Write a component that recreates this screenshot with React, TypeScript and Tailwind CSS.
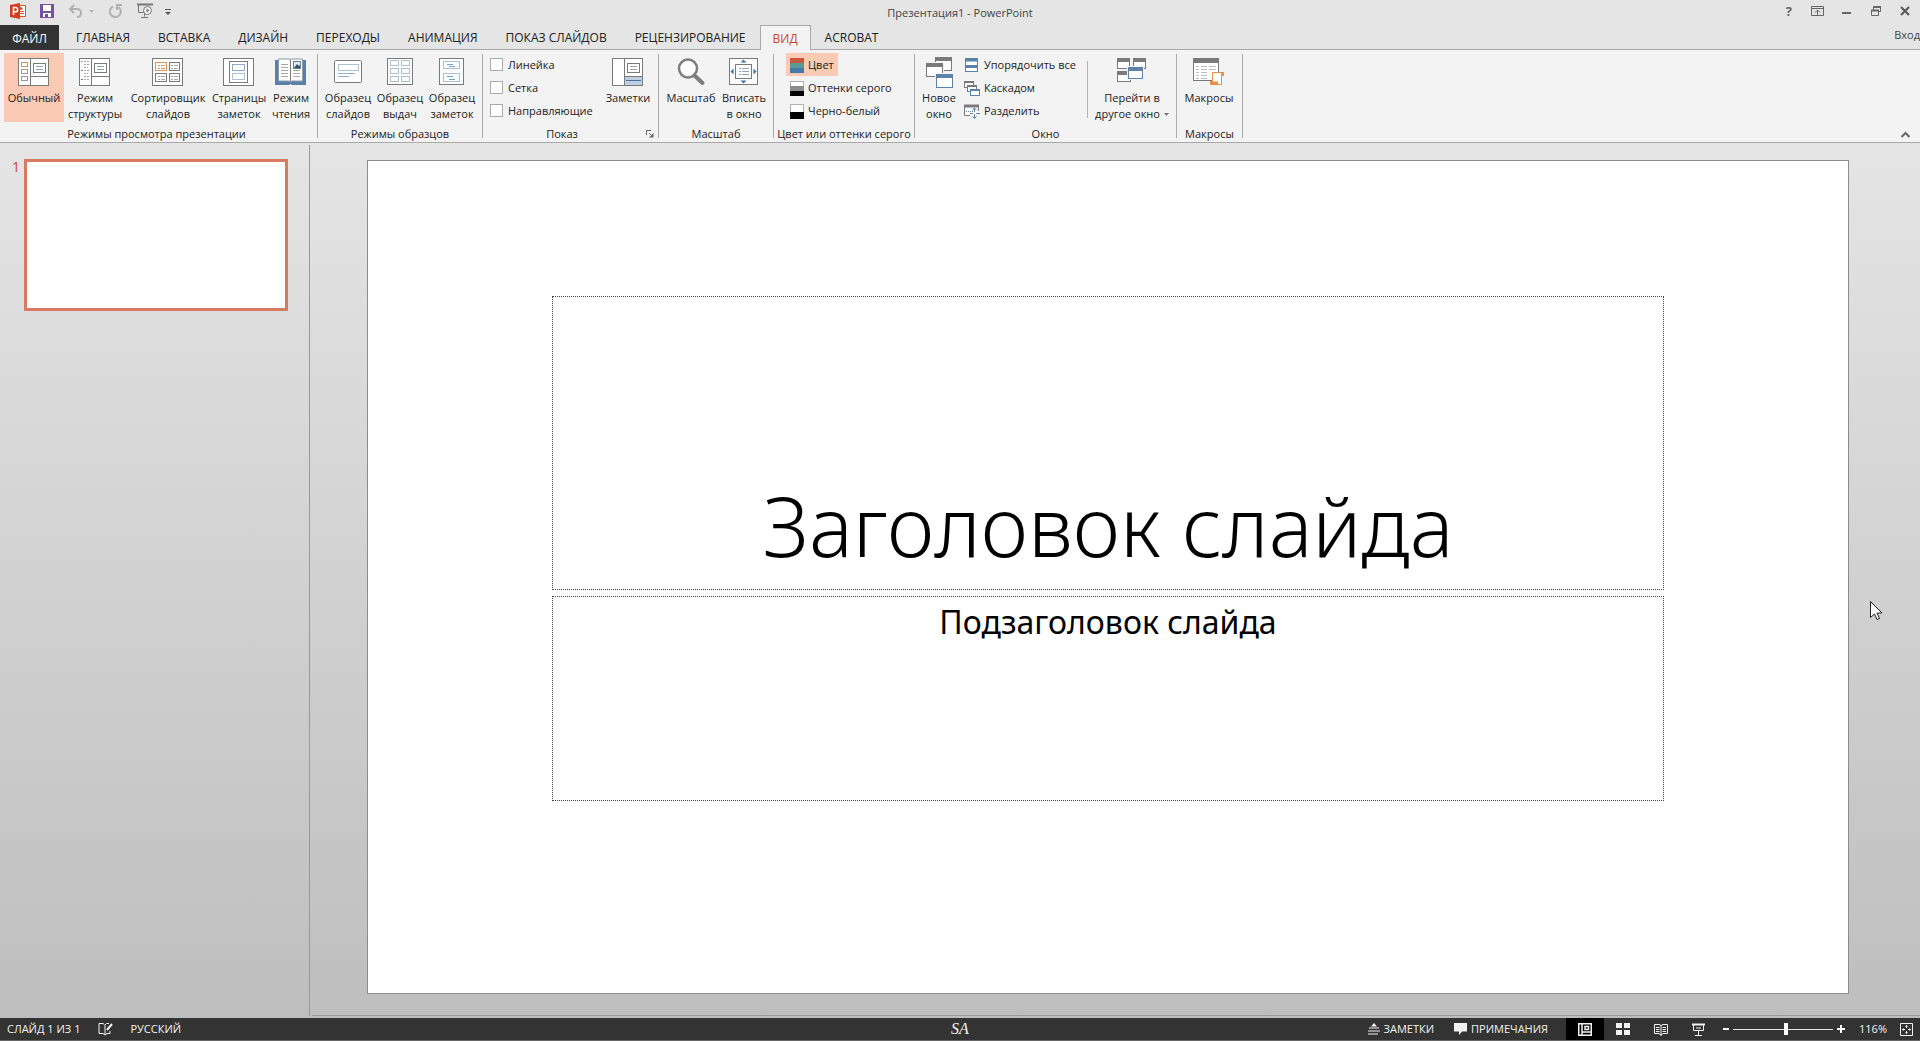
import type { ReactNode } from 'react';

const G = '#7a7a7a';
const B = '#5b82a8';
const O = '#dd9560';

function Svg({ w, h, children }: { w: number; h: number; children: ReactNode }) {
  return (
    <svg width={w} height={h} viewBox={`0 0 ${w} ${h}`} fill="none" aria-hidden="true" className="shrink-0">
      {children}
    </svg>
  );
}

/* ---------- ribbon icons, large ---------- */

const NormalIcon = () => (
  <Svg w={32} h={32}>
    <rect x="0.5" y="1.5" width="30" height="27" fill="#fff" stroke={G} />
    <path d="M12.5 1.5v27M12.5 19.5h18" stroke={G} />
    <rect x="3.5" y="5.5" width="6" height="4" stroke={O} />
    <rect x="3.5" y="12.5" width="6" height="4" stroke="#9a9a9a" />
    <rect x="3.5" y="19.5" width="6" height="4" stroke="#9a9a9a" />
    <rect x="15.5" y="6.5" width="12" height="9" stroke={G} />
    <path d="M18 9.5h7M18 12.5h7" stroke="#8aa0b5" />
  </Svg>
);

const OutlineIcon = () => (
  <Svg w={32} h={32}>
    <rect x="0.5" y="1.5" width="30" height="27" fill="#fff" stroke={G} />
    <path d="M12.5 1.5v27M12.5 19.5h18" stroke={G} />
    <path d="M2 4.5h2" stroke={O} />
    <path d="M5 4.5h5M5 7.5h5M5 10.5h4M5 13.5h5M5 16.5h4M5 19.5h5M5 22.5h5" stroke="#a5a5a5" strokeDasharray="2 1" />
    <path d="M2 13.5h2M2 22.5h2" stroke={G} />
    <rect x="15.5" y="6.5" width="12" height="9" stroke={G} />
    <path d="M18 9.5h7M18 12.5h7" stroke="#8aa0b5" />
  </Svg>
);

const SorterIcon = () => (
  <Svg w={32} h={32}>
    <rect x="0.5" y="1.5" width="30" height="27" fill="#fff" stroke={G} />
    <rect x="3.5" y="5.5" width="11" height="8" stroke={O} />
    <rect x="17.5" y="5.5" width="10" height="8" stroke={G} />
    <rect x="3.5" y="16.5" width="11" height="8" stroke={G} />
    <rect x="17.5" y="16.5" width="10" height="8" stroke={G} />
    <path d="M6 8.5h2M9 8.5h4M6 11.5h2M9 11.5h4" stroke={O} />
    <path d="M19 8.5h2M22 8.5h4M19 11.5h2M22 11.5h4M6 19.5h2M9 19.5h4M6 22.5h2M9 22.5h4M19 19.5h2M22 19.5h4M19 22.5h2M22 22.5h4" stroke="#a5a5a5" />
  </Svg>
);

const NotesPageIcon = () => (
  <Svg w={32} h={32}>
    <rect x="0.5" y="1.5" width="30" height="27" fill="#fff" stroke={G} />
    <rect x="6.5" y="4.5" width="18" height="21" stroke={G} />
    <rect x="9.5" y="7.5" width="12" height="6" stroke="#8fa9c4" />
    <rect x="9.5" y="16.5" width="12" height="6" stroke={B} strokeDasharray="1 1" />
  </Svg>
);

const ReadingIcon = () => (
  <Svg w={32} h={32}>
    <path d="M0 3h31v25H17l-1.500-1-1.500 1H0z" fill="#5880a8" />
    <path d="M3.500 2h11q1 0 1 1 0-1 1-1h11v22h-11l-1 1-1-1h-11z" fill="#fff" stroke="#8a9aa8" />
    <path d="M15.500 3v21" stroke={G} />
    <path d="M6 7.500h7M6 10.500h7M6 13.500h7M6 16.500h7M6 19.500h7M18 13.500h7M18 16.500h7M18 19.500h7" stroke="#a8a8a8" />
    <rect x="18.500" y="4.500" width="7" height="7" fill="#dfe8f0" stroke={B} />
    <path d="M19 11l3-4 2 2 1-1v3z" fill="#35506c" />
  </Svg>
);

const SlideMasterIcon = () => (
  <Svg w={28} h={32}>
    <rect x="0.5" y="3.500" width="27" height="22" rx="1" fill="#fff" stroke={G} />
    <rect x="4.500" y="7.500" width="20" height="6" stroke={B} strokeDasharray="1 1" />
    <path d="M4 16.500h17M4 19.500h11" stroke="#8fb0cc" />
  </Svg>
);

const HandoutMasterIcon = () => (
  <Svg w={28} h={32}>
    <rect x="1.500" y="1.500" width="25" height="26" fill="#fff" stroke={G} />
    {[3, 11, 19].map((y) => (
      <g key={y} stroke={B} strokeDasharray="1 1">
        <rect x="4.500" y={y + 0.5} width="8" height="5" />
        <rect x="15.500" y={y + 0.5} width="8" height="5" />
      </g>
    ))}
  </Svg>
);

const NotesMasterIcon = () => (
  <Svg w={28} h={32}>
    <rect x="1.500" y="1.500" width="24" height="26" fill="#fff" stroke={G} />
    <rect x="5.500" y="4.500" width="16" height="7" stroke={B} strokeDasharray="1 1" />
    <rect x="5.500" y="16.500" width="16" height="8" stroke={B} strokeDasharray="1 1" />
    <path d="M9 7.500h6M11 9.500h6M9 19.500h6M11 22.500h6" stroke="#6fa3c8" />
  </Svg>
);

const NotesIcon = () => (
  <Svg w={32} h={32}>
    <rect x="0.5" y="1.500" width="30" height="27" fill="#fff" stroke={G} />
    <rect x="13" y="20" width="17" height="8" fill="#bcd0e4" />
    <path d="M12.500 1.500v27M12.500 19.500h18" stroke={G} />
    <path d="M14 23.500h15" stroke="#4f7399" />
    <rect x="15.500" y="6.500" width="12" height="9" stroke={G} />
    <path d="M18 9.500h7M18 12.500h7" stroke="#a5a5a5" />
  </Svg>
);

const MagnifierIcon = () => (
  <Svg w={30} h={32}>
    <circle cx="12" cy="11.500" r="9" fill="#fdfdfd" stroke="#7d7d7d" strokeWidth="2.500" />
    <path d="M18.500 18.500l8 7.500" stroke="#7d7d7d" strokeWidth="4" strokeLinecap="round" />
  </Svg>
);

const FitIcon = () => (
  <Svg w={30} h={32}>
    <rect x="0.5" y="1.500" width="28" height="26" fill="#fff" stroke={G} />
    <rect x="6.500" y="7.500" width="16" height="14" stroke={G} />
    <path d="M10 11.500h2M13 11.500h7M10 14.500h2M13 14.500h7M10 17.500h2M13 17.500h7" stroke="#8fa5b8" />
    <path d="M14.500 2.500l3 3h-6zM14.500 26.500l3-3h-6zM1.500 14.500l3-3v6zM27.500 14.500l-3-3v6z" fill="#3f73a8" />
  </Svg>
);

function Win({ x, y, w, h, c }: { x: number; y: number; w: number; h: number; c: string }) {
  return (
    <g>
      <rect x={x - 1} y={y - 1} width={w + 2} height={h + 2} fill="#f2f2f2" />
      <rect x={x + 0.5} y={y + 0.5} width={w - 1} height={h - 1} fill="#fff" stroke={c} />
      <rect x={x} y={y} width={w} height={4} fill={c} />
    </g>
  );
}

const NewWindowIcon = () => (
  <Svg w={28} h={32}>
    <Win x={10} y={0} w={17} h={14} c={G} />
    <Win x={1} y={6} w={17} h={14} c={G} />
    <Win x={11} y={17} w={17} h={14} c={B} />
  </Svg>
);

const SwitchWindowIcon = () => (
  <Svg w={30} h={32}>
    <Win x={0} y={1} w={13} h={11} c={G} />
    <Win x={16} y={1} w={13} h={11} c={G} />
    <Win x={0} y={14} w={14} h={11} c={G} />
    <Win x={11} y={10} w={15} h={12} c={B} />
  </Svg>
);

const MacrosIcon = () => (
  <Svg w={32} h={32}>
    <rect x="0.500" y="1.500" width="25" height="22" fill="#fff" stroke={G} />
    <rect x="0" y="1" width="26" height="5" fill={G} />
    <path d="M3 9.500h3M8 9.500h6M16 9.500h7M3 12.500h3M8 12.500h6M16 12.500h7M3 15.500h3M8 15.500h6M3 18.500h3M8 18.500h6M3 21.500h3M8 21.500h6" stroke="#bdbdbd" />
    <path d="M19.500 15.500h11v3h-2v9h-11v-3h2z" fill="#fff" stroke="#e0904c" />
    <path d="M17 24.500h8v3h-8z" fill="#e0904c" />
    <path d="M28 15.500h3v3h-3z" fill="#e0904c" />
  </Svg>
);

/* ---------- ribbon icons, small ---------- */

const ColorIcon = () => (
  <Svg w={14} h={16}>
    <rect width="14" height="5" y="1" fill="#c8583c" />
    <rect width="14" height="5" y="6" fill="#5a9a94" />
    <rect width="14" height="5" y="11" fill="#4677ad" />
  </Svg>
);
const GrayIcon = () => (
  <Svg w={14} h={16}>
    <rect x="0.500" y="1.500" width="13" height="13" fill="#fff" stroke="#b0b0b0" />
    <rect width="14" height="5" y="6" fill="#8c8c8c" />
    <rect width="14" height="5" y="11" fill="#000" />
  </Svg>
);
const BwIcon = () => (
  <Svg w={14} h={16}>
    <rect x="0.500" y="1.500" width="13" height="13" fill="#fff" stroke="#b0b0b0" />
    <rect width="14" height="7" y="9" fill="#000" />
  </Svg>
);
const ArrangeIcon = () => (
  <Svg w={16} h={16}>
    <rect x="1.500" y="1.500" width="12" height="13" fill="#fff" stroke={B} />
    <path d="M1 3h13M1 9.500h13" stroke={B} strokeWidth="3" />
  </Svg>
);
const CascadeIcon = () => (
  <Svg w={16} h={16}>
    <rect x="0.500" y="1.500" width="9" height="6" fill="#fff" stroke={G} />
    <path d="M0 2h10" stroke={G} strokeWidth="2" />
    <rect x="3.500" y="5.500" width="9" height="6" fill="#fff" stroke={G} />
    <path d="M3 6h10" stroke={G} strokeWidth="2" />
    <rect x="6.500" y="9.500" width="9" height="6" fill="#fff" stroke={B} />
    <path d="M6 10h10" stroke={B} strokeWidth="2" />
  </Svg>
);
const SplitIcon = () => (
  <Svg w={16} h={16}>
    <path d="M.5 2v10.500H6M14.500 2v6" stroke={G} />
    <path d="M1 4h13v8H1z" fill="#fff" />
    <path d="M0 3h15" stroke={G} strokeWidth="3" />
    <path d="M2 8.500h7" stroke={B} strokeDasharray="1 1" />
    <path d="M10.500 5v4M8.500 7l2-2 2 2M10.500 11v4M8.500 13.500l2 2 2-2M6 10.500h3M12 10.500h4" stroke={B} />
  </Svg>
);

/* ---------- building blocks ---------- */

function BigButton({ icon, lines, width, active, caret }: { icon: ReactNode; lines: string[]; width: string; active?: boolean; caret?: boolean }) {
  return (
    <button
      type="button"
      className={`flex h-[69px] shrink-0 flex-col items-center whitespace-nowrap pt-1 text-[11px] leading-4 ${width} ${active ? 'bg-[#fbcab5]' : ''}`}
    >
      {icon}
      <span className="mt-px">{lines[0]}</span>
      {lines[1] && (
        <span className="flex items-center gap-1">
          {lines[1]}
          {caret && (
            <Svg w={5} h={3}>
              <path d="M0 0h5L2.500 3z" fill="#777" />
            </Svg>
          )}
        </span>
      )}
    </button>
  );
}

function SmallButton({ icon, label, active }: { icon: ReactNode; label: string; active?: boolean }) {
  return (
    <button type="button" className={`flex h-[23px] items-center gap-1 whitespace-nowrap px-1 pt-px ${active ? 'bg-[#fbcab5]' : ''}`}>
      {icon}
      {label}
    </button>
  );
}

function Group({ label, width, launcher, children }: { label: string; width: string; launcher?: boolean; children: ReactNode }) {
  return (
    <>
      <section aria-label={label} className={`relative flex shrink-0 flex-col pt-[3px] ${width}`}>
        <div className="flex h-[73px]">{children}</div>
        <div className={`whitespace-nowrap text-center leading-4 ${launcher ? 'pr-[17px]' : ''}`}>{label}</div>
        {launcher && (
          <button type="button" aria-label="Параметры сетки" className="absolute bottom-1 right-1">
            <Svg w={8} h={8}>
              <path d="M0.500 5V0.500H5M3 3l3.500 3.500" stroke="#666" />
              <path d="M7.500 3v4.500H3z" fill="#666" />
            </Svg>
          </button>
        )}
      </section>
      <div className="my-1 w-px shrink-0 bg-[#ababab]" />
    </>
  );
}

function Check({ label }: { label: string }) {
  return (
    <label className="flex h-[23px] items-center gap-[5px] whitespace-nowrap pt-px">
      <input type="checkbox" className="mb-0.5 size-[13px] appearance-none border border-[#ababab] bg-white" />
      {label}
    </label>
  );
}

function Tab({ label }: { label: string }) {
  return (
    <button type="button" role="tab" aria-selected="false" className="border-b border-[#a9a9a9] px-[14px] pt-0.5">
      {label}
    </button>
  );
}

/* ---------- header ---------- */

function TitleBar() {
  return (
    <header className="relative flex h-[25px] items-start justify-between">
      <div className="flex h-[22px] items-center">
        <div className="ml-[10px]">
          <Svg w={16} h={16}>
            <path d="M8 2.500h7.500v11H8z" fill="#fff" stroke="#d35230" />
            <circle cx="11" cy="5.500" r="1.500" fill="#d35230" />
            <path d="M10 8.500h4M10 10.500h4" stroke="#d35230" />
            <path d="M0 2l10-2v16L0 14z" fill="#cf3f22" />
            <path d="M3.500 12V4.500h2a2 2 0 010 4.300h-2" stroke="#fff" strokeWidth="1.500" />
          </Svg>
        </div>
        <button type="button" aria-label="Сохранить" className="ml-[14px]">
          <Svg w={14} h={14}>
            <path d="M0 0h14v14H0z" fill="#7850a0" />
            <path d="M3 1h8v6H3zM3 9h8v4H3z" fill="#fff" />
            <path d="M5 10h3v3H5z" fill="#7850a0" />
          </Svg>
        </button>
        <button type="button" aria-label="Отменить" className="ml-[14px] flex items-center gap-[6px]">
          <Svg w={15} h={14}>
            <path d="M6 1L2 5l4 4M2 5h7q4 0 4 4t-4 4" stroke="#b0b0b0" strokeWidth="2" />
          </Svg>
          <Svg w={5} h={3}>
            <path d="M0 0h5L2.500 3z" fill="#b5b5b5" />
          </Svg>
        </button>
        <button type="button" aria-label="Повторить" className="ml-[15px]">
          <Svg w={13} h={14}>
            <path d="M4 2.500A5.500 5.500 0 1 0 9.500 3" stroke="#b0b0b0" strokeWidth="2" />
            <path d="M8 6V1h5" stroke="#b0b0b0" strokeWidth="2" />
          </Svg>
        </button>
        <button type="button" aria-label="Начать с начала" className="ml-[15px]">
          <Svg w={17} h={16}>
            <path d="M0 1.500h16" stroke="#777" strokeWidth="2" />
            <path d="M1.500 2v7.500H7" stroke="#777" />
            <circle cx="10.500" cy="7.500" r="4" fill="#f5f5f5" stroke="#777" />
            <path d="M9.500 5.500l3 2-3 2z" fill="#777" />
            <path d="M7.500 11v2.500M4 14.500h7" stroke="#777" />
          </Svg>
        </button>
        <button type="button" aria-label="Настройка панели быстрого доступа" className="ml-[11px] mt-0.5">
          <Svg w={7} h={6}>
            <path d="M0 0.500h6" stroke="#555" />
            <path d="M0 3h6L3 6z" fill="#555" />
          </Svg>
        </button>
      </div>
      <h1 className="absolute inset-x-0 top-[5px] text-center text-[11px] leading-4 text-[#444]">Презентация1 - PowerPoint</h1>
      <div className="relative flex h-[22px] items-center pr-[10px] text-[#666]">
        <button type="button" aria-label="Справка" className="text-[13px] font-bold leading-4">?</button>
        <button type="button" aria-label="Параметры отображения ленты" className="ml-[19px]">
          <Svg w={13} h={10}>
            <path d="M0.500 0.500h12v9H.5zM1 2.500h11M6.500 9V4.500M4 6.500L6.500 4 9 6.500" stroke="#666" />
          </Svg>
        </button>
        <button type="button" aria-label="Свернуть" className="ml-[18px] mt-1">
          <Svg w={9} h={2}>
            <path d="M0 1h9" stroke="#666" strokeWidth="2" />
          </Svg>
        </button>
        <button type="button" aria-label="Восстановить" className="ml-5">
          <Svg w={10} h={10}>
            <path d="M0.500 4.500h7v5h-7zM2.500 4V0.500h7v5H8" stroke="#666" />
            <path d="M0 4.500h8M2 1h8" stroke="#666" strokeWidth="2" />
          </Svg>
        </button>
        <button type="button" aria-label="Закрыть" className="ml-[19px]">
          <Svg w={10} h={10}>
            <path d="M1 1l8 8M9 1L1 9" stroke="#555" strokeWidth="2" />
          </Svg>
        </button>
      </div>
    </header>
  );
}

function Tabs() {
  return (
    <nav role="tablist" className="flex h-[25px] whitespace-nowrap text-[12px]">
      <button type="button" className="w-[59px] bg-[#333] pt-0.5 text-white">ФАЙЛ</button>
      <div className="w-[3px] border-b border-[#a9a9a9]" />
      <Tab label="ГЛАВНАЯ" />
      <Tab label="ВСТАВКА" />
      <Tab label="ДИЗАЙН" />
      <Tab label="ПЕРЕХОДЫ" />
      <Tab label="АНИМАЦИЯ" />
      <Tab label="ПОКАЗ СЛАЙДОВ" />
      <Tab label="РЕЦЕНЗИРОВАНИЕ" />
      <button type="button" role="tab" aria-selected="true" className="border border-b-0 border-[#a9a9a9] bg-[#f3f3f3] px-3 pt-px text-[#c9472b]">
        ВИД
      </button>
      <Tab label="ACROBAT" />
      <div className="flex flex-1 items-start justify-end border-b border-[#a9a9a9]">
        <a href="#signin" className="text-[11px] leading-5 text-[#444]">Вход</a>
      </div>
    </nav>
  );
}

function Ribbon() {
  return (
    <div className="relative flex border-b border-[#a9a9a9] bg-[#f3f3f3] text-[11px]">
      <Group label="Режимы просмотра презентации" width="w-[317px] pl-1 pr-2">
        <BigButton active icon={<NormalIcon />} lines={['Обычный']} width="w-[60px]" />
        <BigButton icon={<OutlineIcon />} lines={['Режим', 'структуры']} width="w-[62px]" />
        <BigButton icon={<SorterIcon />} lines={['Сортировщик', 'слайдов']} width="w-[84px]" />
        <BigButton icon={<NotesPageIcon />} lines={['Страницы', 'заметок']} width="w-[58px]" />
        <BigButton icon={<ReadingIcon />} lines={['Режим', 'чтения']} width="w-[46px]" />
      </Group>
      <Group label="Режимы образцов" width="w-[164px] px-1">
        <BigButton icon={<SlideMasterIcon />} lines={['Образец', 'слайдов']} width="w-[52px]" />
        <BigButton icon={<HandoutMasterIcon />} lines={['Образец', 'выдач']} width="w-[52px]" />
        <BigButton icon={<NotesMasterIcon />} lines={['Образец', 'заметок']} width="w-[52px]" />
      </Group>
      <Group label="Показ" width="w-[175px]" launcher>
        <div className="flex w-[119px] flex-col pl-[7px]">
          <Check label="Линейка" />
          <Check label="Сетка" />
          <Check label="Направляющие" />
        </div>
        <BigButton icon={<NotesIcon />} lines={['Заметки']} width="w-[52px]" />
      </Group>
      <Group label="Масштаб" width="w-[114px] px-1">
        <BigButton icon={<MagnifierIcon />} lines={['Масштаб']} width="w-[56px]" />
        <BigButton icon={<FitIcon />} lines={['Вписать', 'в окно']} width="w-[50px]" />
      </Group>
      <Group label="Цвет или оттенки серого" width="w-[140px]">
        <div className="flex flex-col items-start pl-3">
          <SmallButton active icon={<ColorIcon />} label="Цвет" />
          <SmallButton icon={<GrayIcon />} label="Оттенки серого" />
          <SmallButton icon={<BwIcon />} label="Черно-белый" />
        </div>
      </Group>
      <Group label="Окно" width="w-[261px]">
        <BigButton icon={<NewWindowIcon />} lines={['Новое', 'окно']} width="w-[48px]" />
        <div className="-ml-[3px] flex w-[127px] flex-col items-start">
          <SmallButton icon={<ArrangeIcon />} label="Упорядочить все" />
          <SmallButton icon={<CascadeIcon />} label="Каскадом" />
          <SmallButton icon={<SplitIcon />} label="Разделить" />
        </div>
        <div className="my-2 w-px bg-[#b5b5b5]" />
        <BigButton caret icon={<SwitchWindowIcon />} lines={['Перейти в', 'другое окно']} width="w-[88px]" />
      </Group>
      <Group label="Макросы" width="w-[65px]">
        <BigButton icon={<MacrosIcon />} lines={['Макросы']} width="w-[64px]" />
      </Group>
      <button type="button" aria-label="Свернуть ленту" className="absolute bottom-1 right-[10px]">
        <Svg w={9} h={7}>
          <path d="M0.500 6l4-4 4 4" stroke="#666" strokeWidth="2" />
        </Svg>
      </button>
    </div>
  );
}

/* ---------- work area ---------- */

function Workspace() {
  return (
    <div className="flex min-h-0 flex-1 bg-gradient-to-b from-[#e5e5e5] to-[#bebebe]">
      <aside className="mt-0.5 mb-[2px] flex w-[310px] shrink-0 items-start gap-[5px] border-r border-[#999] pl-3 pt-[14px]">
        <span className="w-[7px] text-[14px] leading-4 text-[#c9472b]">1</span>
        <button type="button" aria-label="Слайд 1" className="h-[152px] w-[264px] border-[3px] border-[#d67b62] bg-white" />
      </aside>
      <main className="mb-[2px] ml-[2px] min-w-0 flex-1 border-b border-[#999] pb-[21px] pl-[55px] pr-[71px] pt-[17px]">
        <div className="flex h-full flex-col gap-[6px] border border-[#8c8c8c] bg-white px-[184px] pb-[192px] pt-[135px] font-['Noto_Sans'] text-black">
          <div className="flex min-h-0 flex-[295] items-end justify-center border border-dotted border-[#444]">
            <h2 className="whitespace-nowrap text-[82px] font-light leading-[128px]">Заголовок слайда</h2>
          </div>
          <div className="flex min-h-0 flex-[205] items-start justify-center border border-dotted border-[#444]">
            <p className="whitespace-nowrap text-[32px] leading-[50px]">Подзаголовок слайда</p>
          </div>
        </div>
      </main>
    </div>
  );
}

/* ---------- status bar ---------- */

function StatusBar() {
  return (
    <footer className="relative flex h-[23px] items-center justify-between whitespace-nowrap border-b border-[#666] bg-[#333] text-[11px] text-[#f2f2f2]">
      <div className="flex items-center pl-[7px]">
        <span>СЛАЙД 1 ИЗ 1</span>
        <button type="button" aria-label="Проверка правописания" className="ml-[18px]">
          <Svg w={16} h={14}>
            <path d="M6.500 2.500L5 1.500H1v10h4l2 1.500 2-1.500h3V9M7 3v10M7 3l1.500-1.500H11" stroke="#f2f2f2" />
            <path d="M9 8l5-6" stroke="#f2f2f2" strokeWidth="2" />
          </Svg>
        </button>
        <button type="button" className="ml-4">РУССКИЙ</button>
      </div>
      <div className="pointer-events-none absolute inset-x-0 text-center font-['Liberation_Serif'] text-[16px] italic leading-5">SA</div>
      <div className="flex h-full items-center">
        <button type="button" className="flex items-center gap-1">
          <Svg w={12} h={12}>
            <path d="M6 0l3 3.500H3z" fill="#f2f2f2" />
            <path d="M1 5h10M0 8h12M0 11h10" stroke="#f2f2f2" />
          </Svg>
          ЗАМЕТКИ
        </button>
        <button type="button" className="ml-5 flex items-center gap-1">
          <Svg w={13} h={12}>
            <path d="M0 0h13v8.500H8L5 12V8.500H0z" fill="#f2f2f2" />
          </Svg>
          ПРИМЕЧАНИЯ
        </button>
        <button type="button" aria-label="Обычный" className="ml-[18px] flex h-full w-[38px] items-center justify-center bg-black">
          <Svg w={14} h={13}>
            <path d="M.75.75h12.500v11.500H.75zM4 1v11M4 9h9" stroke="#f2f2f2" strokeWidth="1.500" />
            <path d="M7 3.500h3.500v3H7z" stroke="#f2f2f2" strokeWidth="1.500" />
          </Svg>
        </button>
        <button type="button" aria-label="Сортировщик слайдов" className="ml-3">
          <Svg w={14} h={12}>
            <path d="M0 0h6v5H0zM8 0h6v5H8zM0 7h6v5H0zM8 7h6v5H8z" fill="#f2f2f2" />
          </Svg>
        </button>
        <button type="button" aria-label="Режим чтения" className="ml-6">
          <Svg w={14} h={13}>
            <path d="M.5 1.500H5L7 2.500 9 1.500h4.500v9H9l-2 1.500-2-1.500H.5zM7 2.500V13M2 4.500h3.500M2 6.500h3.500M2 8.500h3.500M8.500 4.500H12M8.500 6.500H12M8.500 8.500H12" stroke="#f2f2f2" />
          </Svg>
        </button>
        <button type="button" aria-label="Показ слайдов" className="ml-6">
          <Svg w={13} h={13}>
            <path d="M0 1.500h13" stroke="#f2f2f2" strokeWidth="2" />
            <path d="M1.500 2v5.500h10V2M6.500 8v4M3 12.500h7M4 5h5" stroke="#f2f2f2" />
          </Svg>
        </button>
        <button type="button" aria-label="Уменьшить" className="ml-[18px]">
          <Svg w={6} h={2}>
            <path d="M0 1h6" stroke="#fff" strokeWidth="2" />
          </Svg>
        </button>
        <input
          type="range"
          aria-label="Масштаб"
          min={0}
          max={100}
          defaultValue={53}
          className="ml-1 h-3 w-[100px] appearance-none bg-[linear-gradient(#e5e5e5,#e5e5e5)] bg-[length:100%_1px] bg-center bg-no-repeat [&::-webkit-slider-thumb]:h-3 [&::-webkit-slider-thumb]:w-1 [&::-webkit-slider-thumb]:appearance-none [&::-webkit-slider-thumb]:bg-white"
        />
        <button type="button" aria-label="Увеличить" className="ml-1">
          <Svg w={8} h={8}>
            <path d="M0 4h8M4 0v8" stroke="#fff" strokeWidth="2" />
          </Svg>
        </button>
        <button type="button" className="ml-[14px]">116%</button>
        <button type="button" aria-label="Вписать слайд в окно" className="ml-[13px] mr-[7px]">
          <Svg w={13} h={13}>
            <path d="M.5.5h12v12H.5z" stroke="#f2f2f2" />
            <path d="M6.500 2v3M6.500 8v3M2 6.500h3M8 6.500h3M5.500 3.500l1-1 1 1M5.500 9.500l1 1 1-1M3.500 5.500l-1 1 1 1M9.500 5.500l1 1-1 1" stroke="#f2f2f2" />
          </Svg>
        </button>
      </div>
    </footer>
  );
}

function Cursor() {
  return (
    <div className="pointer-events-none absolute left-[1870px] top-[601px]">
      <Svg w={13} h={20}>
        <path d="M.5.5v16l4-3.500 2.500 5.500 2.500-1-2.500-5.500h5z" fill="#fff" stroke="#222" />
      </Svg>
    </div>
  );
}

export default function App() {
  return (
    <div className="relative flex h-screen flex-col overflow-hidden bg-[#e5e5e5] font-['Open_Sans','Noto_Sans',sans-serif] text-[#222]">
      <TitleBar />
      <Tabs />
      <Ribbon />
      <Workspace />
      <StatusBar />
      <Cursor />
    </div>
  );
}
